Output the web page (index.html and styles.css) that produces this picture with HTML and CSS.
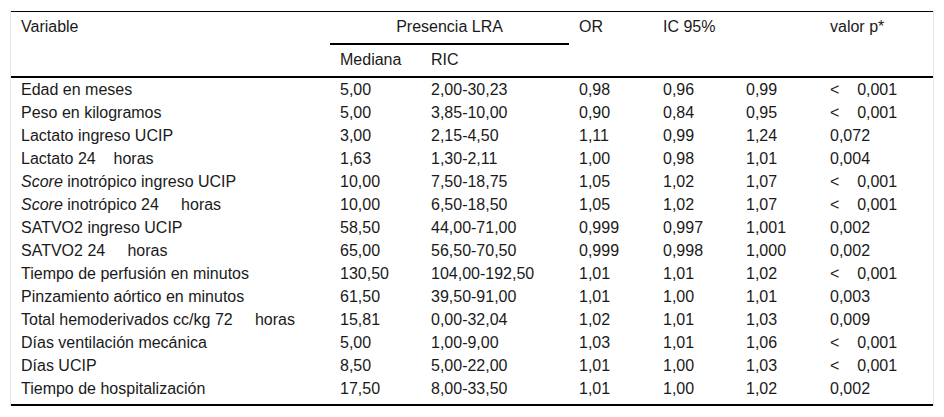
FILE: index.html
```html
<!DOCTYPE html>
<html lang="es">
<head>
<meta charset="utf-8">
<title>Tabla</title>
<link rel="stylesheet" href="styles.css">
</head>
<body>
<div class="wrap">
<table class="tbl">
<colgroup>
<col class="c1"><col class="c2"><col class="c3"><col class="c4"><col class="c5"><col class="c6"><col class="c7">
</colgroup>
<thead>
<tr class="h1">
<th rowspan="2" class="hb">Variable</th>
<th colspan="2" class="grp">Presencia LRA</th>
<th rowspan="2" class="hb">OR</th>
<th rowspan="2" colspan="2" class="hb">IC 95%</th>
<th rowspan="2" class="hb">valor p*</th>
</tr>
<tr class="h2">
<th class="hb">Mediana</th>
<th class="hb">RIC</th>
</tr>
</thead>
<tbody>
<tr><td>Edad en meses</td><td>5,00</td><td>2,00-30,23</td><td>0,98</td><td>0,96</td><td>0,99</td><td>&lt;&nbsp;&nbsp;&nbsp; 0,001</td></tr>
<tr><td>Peso en kilogramos</td><td>5,00</td><td>3,85-10,00</td><td>0,90</td><td>0,84</td><td>0,95</td><td>&lt;&nbsp;&nbsp;&nbsp; 0,001</td></tr>
<tr><td>Lactato ingreso UCIP</td><td>3,00</td><td>2,15-4,50</td><td>1,11</td><td>0,99</td><td>1,24</td><td>0,072</td></tr>
<tr><td>Lactato 24&nbsp;&nbsp;&nbsp; horas</td><td>1,63</td><td>1,30-2,11</td><td>1,00</td><td>0,98</td><td>1,01</td><td>0,004</td></tr>
<tr><td><em>Score</em> inotrópico ingreso UCIP</td><td>10,00</td><td>7,50-18,75</td><td>1,05</td><td>1,02</td><td>1,07</td><td>&lt;&nbsp;&nbsp;&nbsp; 0,001</td></tr>
<tr><td><em>Score</em> inotrópico 24&nbsp;&nbsp;&nbsp;&nbsp; horas</td><td>10,00</td><td>6,50-18,50</td><td>1,05</td><td>1,02</td><td>1,07</td><td>&lt;&nbsp;&nbsp;&nbsp; 0,001</td></tr>
<tr><td>SATVO2 ingreso UCIP</td><td>58,50</td><td>44,00-71,00</td><td>0,999</td><td>0,997</td><td>1,001</td><td>0,002</td></tr>
<tr><td>SATVO2 24&nbsp;&nbsp;&nbsp;&nbsp; horas</td><td>65,00</td><td>56,50-70,50</td><td>0,999</td><td>0,998</td><td>1,000</td><td>0,002</td></tr>
<tr><td>Tiempo de perfusión en minutos</td><td>130,50</td><td>104,00-192,50</td><td>1,01</td><td>1,01</td><td>1,02</td><td>&lt;&nbsp;&nbsp;&nbsp; 0,001</td></tr>
<tr><td>Pinzamiento aórtico en minutos</td><td>61,50</td><td>39,50-91,00</td><td>1,01</td><td>1,00</td><td>1,01</td><td>0,003</td></tr>
<tr><td>Total hemoderivados cc/kg 72&nbsp;&nbsp;&nbsp;&nbsp; horas</td><td>15,81</td><td>0,00-32,04</td><td>1,02</td><td>1,01</td><td>1,03</td><td>0,009</td></tr>
<tr><td>Días ventilación mecánica</td><td>5,00</td><td>1,00-9,00</td><td>1,03</td><td>1,01</td><td>1,06</td><td>&lt;&nbsp;&nbsp;&nbsp; 0,001</td></tr>
<tr><td>Días UCIP</td><td>8,50</td><td>5,00-22,00</td><td>1,01</td><td>1,00</td><td>1,03</td><td>&lt;&nbsp;&nbsp;&nbsp; 0,001</td></tr>
<tr class="last"><td>Tiempo de hospitalización</td><td>17,50</td><td>8,00-33,50</td><td>1,01</td><td>1,00</td><td>1,02</td><td>0,002</td></tr>
</tbody>
</table>
</div>
</body>
</html>
```

FILE: styles.css
```css
html, body {
  margin: 0;
  padding: 0;
  background: #fff;
}
body {
  padding: 11px 0 0 10px;
  font-family: "Liberation Sans", Arial, sans-serif;
  font-size: 16px;
  color: #1a1a1a;
}
.wrap {
  width: 922px;
  border-left: 1px solid #e6e6e6;
  border-right: 1px solid #e6e6e6;
}
.tbl {
  width: 922px;
  border-collapse: collapse;
  table-layout: fixed;
  border-top: 1px solid #000;
  border-bottom: 2px solid #000;
}
.c1 { width: 319px; }
.c2 { width: 91px; }
.c3 { width: 148px; }
.c4 { width: 84px; }
.c5 { width: 83px; }
.c6 { width: 84px; }
.c7 { width: 113px; }
.tbl th {
  font-weight: normal;
  text-align: left;
  vertical-align: top;
  padding: 7px 10px 0 10px;
  line-height: 16px;
}
.tbl .h1 th { height: 24px; }
.tbl .grp {
  text-align: center;
  border-bottom: 2px solid #000;
  padding-left: 0;
  padding-right: 0;
  height: 23px;
}
.tbl .h2 th { height: 24px; }
.tbl .hb { border-bottom: 2px solid #000; }
.tbl td {
  padding: 0 10px;
  line-height: 23px;
  height: 23px;
  white-space: nowrap;
}
.tbl .last td { padding-bottom: 4px; }
```
